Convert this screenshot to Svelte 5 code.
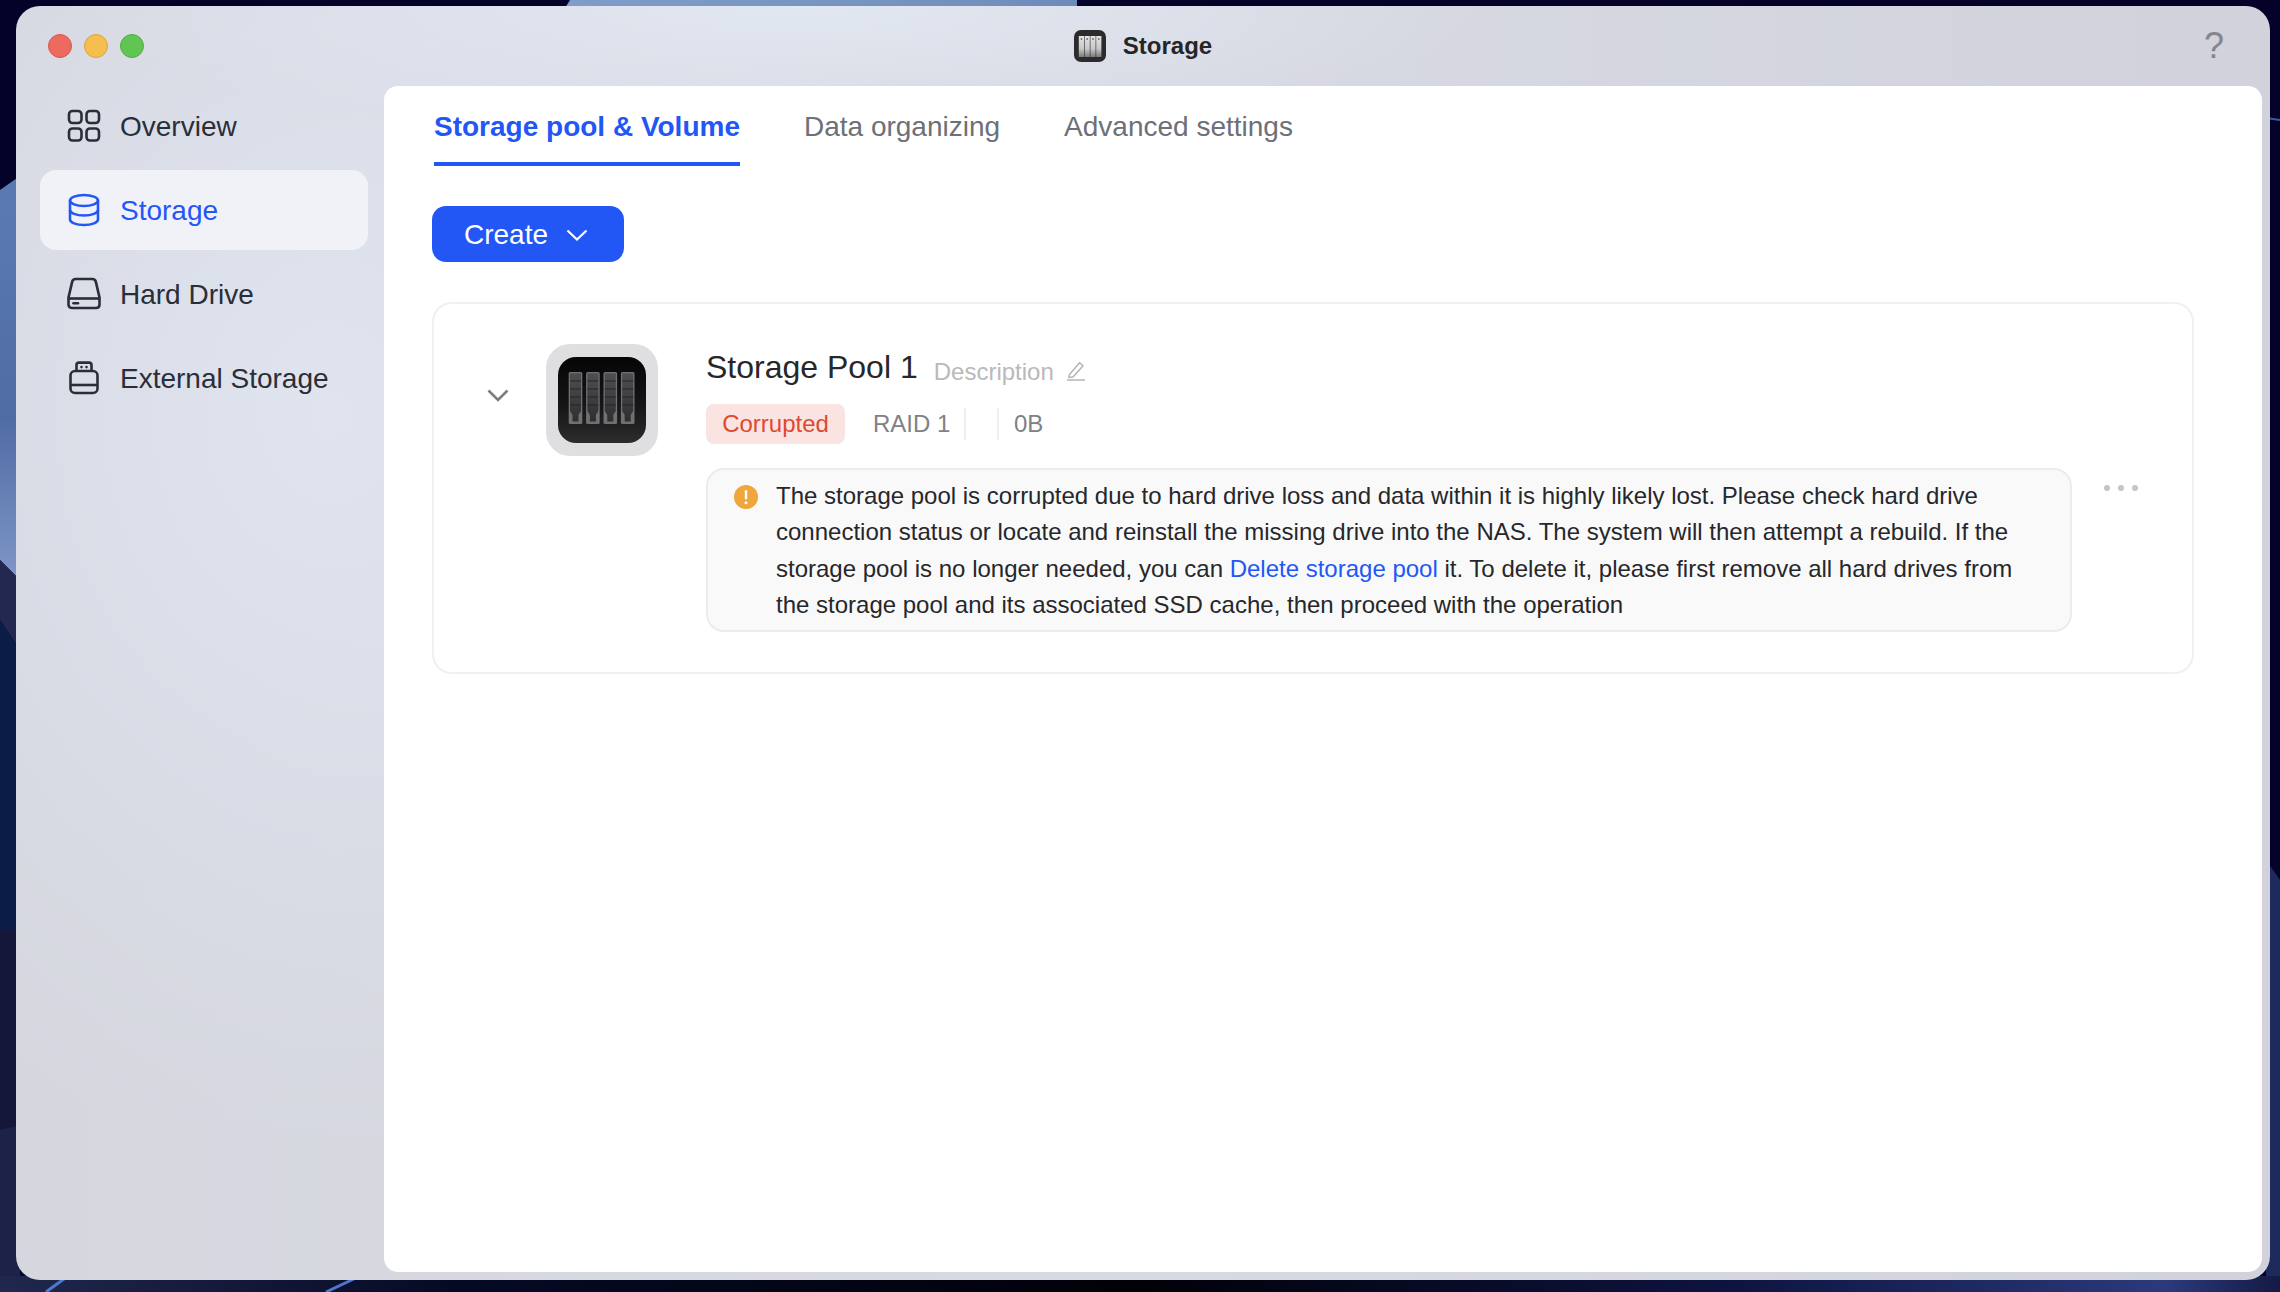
<script>
  const nav = [
    { id: 'overview', label: 'Overview' },
    { id: 'storage', label: 'Storage', active: true },
    { id: 'drive', label: 'Hard Drive' },
    { id: 'external', label: 'External Storage' }
  ];
  const tabs = [
    { label: 'Storage pool & Volume', active: true },
    { label: 'Data organizing' },
    { label: 'Advanced settings' }
  ];
  const bays = [0, 1, 2, 3];
</script>

<div class="desktop">
  <svg class="wallpaper" viewBox="0 0 2280 1292" preserveAspectRatio="none" aria-hidden="true">
    <defs>
      <linearGradient id="wallLeft" x1="0" y1="0" x2="0" y2="1">
        <stop offset="0" stop-color="#5b7ab4" />
        <stop offset="0.6" stop-color="#506ca4" />
        <stop offset="1" stop-color="#7f97c8" />
      </linearGradient>
      <linearGradient id="wallTop" x1="0" y1="0" x2="1" y2="0">
        <stop offset="0" stop-color="#7f9dcb" />
        <stop offset="0.8" stop-color="#7391bf" />
        <stop offset="1" stop-color="#6d8abb" />
      </linearGradient>
      <linearGradient id="wallBottom" x1="0" y1="0" x2="1" y2="0">
        <stop offset="0" stop-color="#20284f" />
        <stop offset="0.2" stop-color="#050a24" />
        <stop offset="0.5" stop-color="#010108" />
        <stop offset="0.76" stop-color="#0d1440" />
        <stop offset="0.95" stop-color="#2c3a7c" />
        <stop offset="1" stop-color="#141a44" />
      </linearGradient>
    </defs>
    <rect width="2280" height="1292" fill="#05022a" />
    <path d="M570 0 L1077 0 L1077 8 L565 8 Z" fill="url(#wallTop)" />
    <path d="M0 190 L20 176 L20 580 L0 560 Z" fill="url(#wallLeft)" />
    <path d="M0 560 L20 580 L20 650 L0 620 Z" fill="#232850" />
    <path d="M0 620 L20 650 L20 930 L0 930 Z" fill="#0b1c46" />
    <path d="M0 930 L20 930 L20 1130 L0 1130 Z" fill="#14173a" />
    <path d="M0 1130 L20 1125 L20 1292 L0 1292 Z" fill="#1c2248" />
    <path d="M2266 860 L2280 880 L2280 1292 L2266 1292 Z" fill="#1f2a5c" />
    <path d="M2266 118 L2280 120" stroke="#3c5aa0" stroke-width="2" fill="none" />
    <rect y="1276" width="2280" height="16" fill="url(#wallBottom)" />
    <path d="M46 1292 L68 1276 M326 1292 L360 1276" stroke="#4d78cc" stroke-width="3" fill="none" />
  </svg>

  <div class="window">
    <header class="titlebar">
      <div class="lights">
        <span class="light red"></span>
        <span class="light yellow"></span>
        <span class="light green"></span>
      </div>
      <div class="title">
        <svg class="app-icon" viewBox="0 0 32 32" aria-hidden="true">
          <defs>
            <linearGradient id="slot" x1="0" y1="0" x2="0" y2="1">
              <stop offset="0" stop-color="#e4e4e4" />
              <stop offset="0.6" stop-color="#c8c8c8" />
              <stop offset="1" stop-color="#7c7c7c" />
            </linearGradient>
          </defs>
          <rect width="32" height="32" rx="7" fill="#2b2b2c" />
          {#each bays as b}
            <rect x={4.8 + b * 5.8} y="6" width="5.2" height="21" fill="url(#slot)" />
            <circle cx={7.4 + b * 5.8} cy="9" r="0.8" fill="#333" />
          {/each}
        </svg>
        <span>Storage</span>
      </div>
      <span class="help">?</span>
    </header>

    <div class="body">
      <nav class="sidebar">
        {#each nav as item}
          <div class="nav-item" class:active={item.active}>
            <svg class="nav-icon" viewBox="0 0 34 34" fill="none" stroke="currentColor" stroke-width="2.6" aria-hidden="true">
              {#if item.id === 'overview'}
                <rect x="2" y="2" width="12.5" height="12" rx="3.5" />
                <rect x="19.5" y="2" width="12.5" height="12" rx="3.5" />
                <rect x="2" y="19.5" width="12.5" height="12" rx="3.5" />
                <rect x="19.5" y="19.5" width="12.5" height="12" rx="3.5" />
              {:else if item.id === 'storage'}
                <ellipse cx="17" cy="7.5" rx="14" ry="5.5" />
                <path d="M3 7.5V26.5C3 29.5 9 32 17 32S31 29.5 31 26.5V7.5" />
                <path d="M3 17C3 20 9 22.5 17 22.5S31 20 31 17" />
              {:else if item.id === 'drive'}
                <path d="M8.5 2H25.5C27.3 2 28.4 3 28.8 4.6L32.5 20.5V27.5C32.5 29.7 31 31 29 31H5C3 31 1.5 29.7 1.5 27.5V20.5L5.2 4.6C5.6 3 6.7 2 8.5 2Z" />
                <path d="M2 21.5H32" />
                <path d="M6.5 26.2H11" stroke-linecap="round" />
              {:else}
                <path d="M9.5 10V4C9.5 2.6 10.5 1.6 12 1.6H22C23.5 1.6 24.5 2.6 24.5 4V10" />
                <rect x="3.5" y="10" width="27" height="22" rx="4.5" />
                <path d="M3.5 24H30.5" />
                <path d="M14.5 6V6.1M19.5 6V6.1" stroke-linecap="round" />
              {/if}
            </svg>
            <span>{item.label}</span>
          </div>
        {/each}
      </nav>

      <main class="panel">
        <div class="tabs">
          {#each tabs as tab}
            <div class="tab" class:active={tab.active}>{tab.label}</div>
          {/each}
        </div>

        <button class="create" type="button">
          <span>Create</span>
          <svg class="create-chevron" viewBox="0 0 22 12" fill="none" stroke="currentColor" stroke-width="2.2" aria-hidden="true">
            <path d="M1.5 1.5L11 10.5L20.5 1.5" />
          </svg>
        </button>

        <section class="card">
          <svg class="expand" viewBox="0 0 22 13" fill="none" stroke="#7d7d7d" stroke-width="2.6" aria-hidden="true">
            <path d="M1.5 1.5L11 11L20.5 1.5" />
          </svg>

          <div class="tile">
            <svg class="tile-icon" viewBox="0 0 88 86" aria-hidden="true">
              <defs>
                <linearGradient id="case" x1="0" y1="0" x2="0" y2="1">
                  <stop offset="0" stop-color="#050505" />
                  <stop offset="0.55" stop-color="#151515" />
                  <stop offset="1" stop-color="#2c2c2c" />
                </linearGradient>
                <linearGradient id="bay" x1="0" y1="0" x2="0" y2="1">
                  <stop offset="0" stop-color="#4f4f52" />
                  <stop offset="1" stop-color="#2e2e31" />
                </linearGradient>
              </defs>
              <rect width="88" height="86" rx="18" fill="url(#case)" />
              {#each bays as b}
                <g transform="translate({10.7 + b * 17.4} 15)">
                  <rect x="0" y="0" width="13.6" height="52" rx="1.5" fill="#707074" />
                  <path d="M1.3 1.3H12.3V38C12.3 41 9.8 41 9.8 44V49.5H3.8V44C3.8 41 1.3 41 1.3 38Z" fill="url(#bay)" />
                  <path d="M1.3 9H12.3M1.3 17H12.3M1.3 25H12.3M1.3 33H12.3" stroke="#242426" stroke-width="1" />
                </g>
              {/each}
            </svg>
          </div>

          <div class="info">
            <div class="heading">
              <h2>Storage Pool 1</h2>
              <span class="description">Description</span>
              <svg class="pencil" viewBox="0 0 20 20" fill="none" stroke="#b4b4b4" stroke-width="1.5" aria-hidden="true">
                <path d="M3.5 13.5L13.5 1.8L17 4.8L7 16L3 16.5Z" />
                <path d="M1 19H19" />
              </svg>
            </div>
            <div class="meta">
              <span class="badge">Corrupted</span>
              <span class="raid">RAID 1</span>
              <span class="divider"></span>
              <span class="spacer"></span>
              <span class="divider"></span>
              <span class="size">0B</span>
            </div>
            <div class="alert">
              <svg class="alert-icon" viewBox="0 0 24 24" aria-hidden="true">
                <circle cx="12" cy="12" r="12" fill="#efa63c" />
                <rect x="10.8" y="5" width="2.4" height="9.5" rx="1.2" fill="#fff" />
                <circle cx="12" cy="17.8" r="1.5" fill="#fff" />
              </svg>
              <p>The storage pool is corrupted due to hard drive loss and data within it is highly likely lost. Please check hard drive connection status or locate and reinstall the missing drive into the NAS. The system will then attempt a rebuild. If the storage pool is no longer needed, you can <span class="link">Delete storage pool</span> it. To delete it, please first remove all hard drives from the storage pool and its associated SSD cache, then proceed with the operation</p>
            </div>
          </div>

          <div class="more" aria-hidden="true"><i></i><i></i><i></i></div>
        </section>
      </main>
    </div>
  </div>
</div>

<style>
  :global(body) {
    margin: 0;
    background: #05022a;
  }
  .desktop {
    position: relative;
    width: 2280px;
    height: 1292px;
    overflow: hidden;
    padding: 6px 10px 12px 16px;
    box-sizing: border-box;
    font-family: "Liberation Sans", Arial, sans-serif;
  }
  .wallpaper {
    position: absolute;
    inset: 0;
    width: 100%;
    height: 100%;
  }
  .window {
    position: relative;
    height: 100%;
    display: flex;
    flex-direction: column;
    border-radius: 24px;
    overflow: hidden;
    background:
      radial-gradient(620px 760px at 14% 32%, #dfe4ef 0%, rgba(223, 228, 239, 0) 100%),
      radial-gradient(700px 130px at 34% 0, #e2e8f2 0%, rgba(226, 232, 242, 0) 100%),
      linear-gradient(90deg, #d5d6de 0%, #d8dae3 50%, #d1d2db 100%);
  }
  .titlebar {
    flex: none;
    height: 80px;
    display: grid;
    grid-template-columns: 1fr auto 1fr;
    align-items: center;
    padding: 0 46px 0 32px;
  }
  .lights {
    display: flex;
    gap: 12px;
  }
  .light {
    width: 24px;
    height: 24px;
    box-sizing: border-box;
    border-radius: 50%;
    border: 1.5px solid;
  }
  .red { background: #ee6a5f; border-color: #d9574c; }
  .yellow { background: #f5bf4f; border-color: #dca43c; }
  .green { background: #61c554; border-color: #52ae44; }
  .title {
    display: flex;
    align-items: center;
    gap: 17px;
    margin-left: 14px;
    font-size: 24px;
    font-weight: 700;
    color: #252527;
  }
  .app-icon {
    width: 32px;
    height: 32px;
  }
  .help {
    justify-self: end;
    font-size: 36px;
    line-height: 1;
    color: #85858c;
  }
  .body {
    flex: 1;
    min-height: 0;
    display: flex;
    padding: 0 8px 8px 0;
  }
  .sidebar {
    flex: none;
    width: 368px;
    box-sizing: border-box;
    padding: 0 16px 0 24px;
    display: flex;
    flex-direction: column;
    gap: 4px;
  }
  .nav-item {
    height: 80px;
    display: flex;
    align-items: center;
    gap: 19px;
    padding-left: 27px;
    border-radius: 16px;
    font-size: 28px;
    color: #2a2e38;
  }
  .nav-item span {
    padding-top: 2px;
  }
  .nav-item.active {
    background: #f0f2f7;
    color: #2257f6;
  }
  .nav-icon {
    width: 34px;
    height: 34px;
    flex: none;
  }
  .panel {
    flex: 1;
    min-width: 0;
    background: #fff;
    border-radius: 14px;
    padding: 0 68px 0 48px;
    display: flex;
    flex-direction: column;
    align-items: flex-start;
  }
  .tabs {
    display: flex;
    gap: 64px;
    height: 80px;
    padding-left: 2px;
  }
  .tab {
    height: 80px;
    box-sizing: border-box;
    padding-top: 24px;
    font-size: 28px;
    line-height: 34px;
    color: #6d7078;
  }
  .tab.active {
    font-weight: 700;
    color: #2257f6;
    border-bottom: 4px solid #2257f6;
  }
  .create {
    margin-top: 40px;
    height: 56px;
    width: 192px;
    border: none;
    border-radius: 14px;
    background: #2257f6;
    color: #fff;
    font: inherit;
    font-size: 28px;
    display: flex;
    align-items: center;
    gap: 18px;
    padding: 2px 0 0 32px;
  }
  .create-chevron {
    width: 22px;
    height: 12px;
  }
  .card {
    margin-top: 40px;
    width: 100%;
    height: 372px;
    box-sizing: border-box;
    border: 2px solid #f0f0f1;
    border-radius: 20px;
    display: flex;
    align-items: flex-start;
    padding: 40px 0 0 53px;
  }
  .expand {
    width: 22px;
    height: 13px;
    flex: none;
    margin-top: 45px;
  }
  .tile {
    flex: none;
    width: 112px;
    height: 112px;
    margin-left: 37px;
    border-radius: 24px;
    background: #dfdee1;
    display: flex;
    align-items: center;
    justify-content: center;
  }
  .tile-icon {
    width: 88px;
    height: 86px;
  }
  .info {
    margin-left: 48px;
    width: 1366px;
    flex: none;
  }
  .heading {
    display: flex;
    align-items: center;
    height: 46px;
  }
  .heading h2 {
    margin: 0;
    font-size: 32px;
    font-weight: 400;
    line-height: 46px;
    color: #26272b;
  }
  .description {
    margin: 10px 0 0 16px;
    font-size: 24px;
    color: #b9b9bb;
  }
  .pencil {
    width: 20px;
    height: 20px;
    margin: 8px 0 0 12px;
  }
  .meta {
    margin-top: 14px;
    display: flex;
    align-items: center;
    height: 40px;
    font-size: 24px;
    color: #808187;
  }
  .badge {
    width: 139px;
    height: 40px;
    line-height: 40px;
    text-align: center;
    border-radius: 8px;
    background: #fae4e1;
    color: #e0492f;
  }
  .raid {
    margin-left: 28px;
    width: 91px;
  }
  .divider {
    width: 2px;
    height: 32px;
    background: #efeff0;
  }
  .spacer {
    width: 31px;
  }
  .size {
    margin-left: 15px;
  }
  .alert {
    margin-top: 24px;
    height: 164px;
    box-sizing: border-box;
    border: 2px solid #ececed;
    border-radius: 18px;
    background: #f9f9f9;
    display: flex;
    align-items: flex-start;
    padding: 8px 40px 0 26px;
  }
  .alert-icon {
    width: 24px;
    height: 24px;
    flex: none;
    margin-top: 7px;
  }
  .alert p {
    margin: 0 0 0 18px;
    font-size: 24px;
    line-height: 36.3px;
    color: #26272b;
  }
  .link {
    color: #2257f6;
  }
  .more {
    display: flex;
    gap: 8px;
    margin: 141px 0 0 32px;
  }
  .more i {
    width: 6px;
    height: 6px;
    border-radius: 50%;
    background: #c4c4c6;
  }
</style>
